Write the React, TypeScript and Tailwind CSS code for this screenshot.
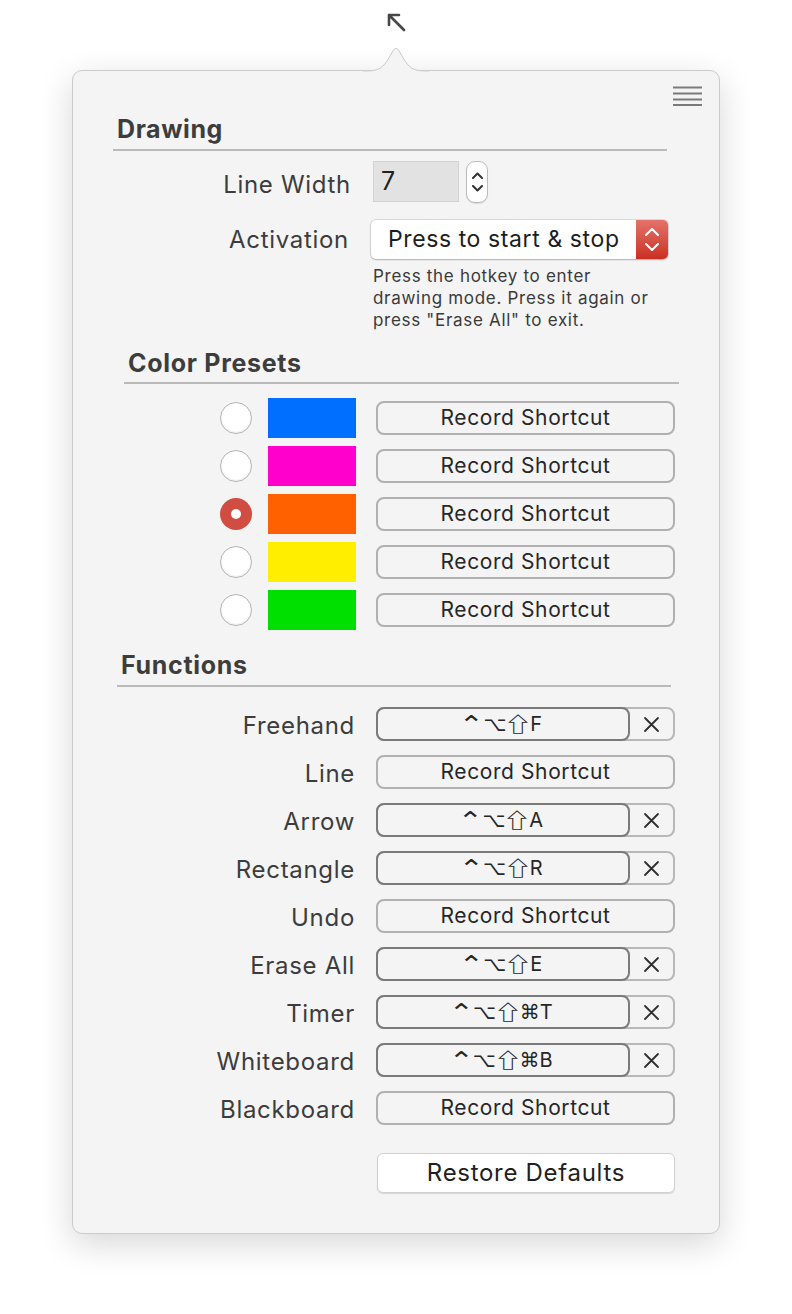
import React from 'react';

const presets = [
  { color: 'bg-[#006fff]', selected: false },
  { color: 'bg-[#ff00cc]', selected: false },
  { color: 'bg-[#ff6000]', selected: true },
  { color: 'bg-[#ffee00]', selected: false },
  { color: 'bg-[#00e000]', selected: false },
];

const functions: { label: string; keys: string[] | null }[] = [
  { label: 'Freehand', keys: ['F'] },
  { label: 'Line', keys: null },
  { label: 'Arrow', keys: ['A'] },
  { label: 'Rectangle', keys: ['R'] },
  { label: 'Undo', keys: null },
  { label: 'Erase All', keys: ['E'] },
  { label: 'Timer', keys: ['⌘', 'T'] },
  { label: 'Whiteboard', keys: ['⌘', 'B'] },
  { label: 'Blackboard', keys: null },
];

const Radio: React.FC<{ selected: boolean }> = ({ selected }) =>
  selected ? (
    <div className="w-[32px] h-[32px] rounded-full bg-[#d14c41] flex items-center justify-center">
      <div className="w-[10px] h-[10px] rounded-full bg-white" />
    </div>
  ) : (
    <div className="w-[32px] h-[32px] rounded-full bg-white border border-[#b4b4b4] shadow-[inset_0_-1px_2px_rgba(0,0,0,0.08)]" />
  );

const CloseIcon = () => (
  <svg width="17" height="17" viewBox="0 0 17 17" fill="none" stroke="#2e2e2e" strokeWidth="1.8" strokeLinecap="round">
    <path d="M2 2 L15 15 M15 2 L2 15" />
  </svg>
);

// modifier keys ⌃⌥⇧ followed by the rest of the combo
const KeyCombo: React.FC<{ keys: string[] }> = ({ keys }) => (
  <span className="flex items-center text-[20px] text-[#262626] leading-none">
    <span className="inline-block font-['DejaVu_Sans',sans-serif] text-[20px] scale-x-[1.5] scale-y-[1.25] mr-[3px]">⌃</span>
    <span className="font-['DejaVu_Sans',sans-serif]">⌥</span>
    <span className="inline-block font-['Noto_Sans_CJK_JP','DejaVu_Sans',sans-serif] text-[20px] scale-x-[1.45] mx-[2px]">⇧</span>
    {keys.map((k, i) => (
      <span key={i} className={k === '⌘' ? "font-['DejaVu_Sans',sans-serif]" : "font-['Inter',sans-serif] tracking-[0.5px]"}>
        {k}
      </span>
    ))}
  </span>
);

const ShortcutField: React.FC<{ keys: string[] | null }> = ({ keys }) => {
  if (!keys) {
    return (
      <div className="w-[299px] h-[34px] rounded-[8px] border-2 border-[#b0b0b0] flex items-center justify-center text-[21px] tracking-[0.6px] text-[#262626]">
        Record Shortcut
      </div>
    );
  }
  return (
    <div className="w-[299px] h-[34px] rounded-[8px] border-2 border-[#b8b8b8] flex">
      <div className="w-[254px] h-[34px] -ml-[2px] -mt-[2px] rounded-[8px] border-2 border-[#7a7a7a] flex items-center justify-center">
        <KeyCombo keys={keys} />
      </div>
      <div className="flex-1 flex items-center justify-center">
        <CloseIcon />
      </div>
    </div>
  );
};

export default function App() {
  return (
    <div className="w-full min-h-[1314px] bg-white font-['Inter','DejaVu_Sans',sans-serif]">
      {/* pointer arrow above the popover */}
      <div className="h-[70px] flex justify-center pt-[12px]">
        <svg width="20" height="20" viewBox="0 0 20 20" fill="none" stroke="#474747" strokeWidth="2.6" strokeLinecap="round" strokeLinejoin="round">
          <path d="M3 3 L18 18 M3 3 L3 13 M3 3 L13 3" />
        </svg>
      </div>

      <div className="relative mx-auto w-[648px] h-[1164px] rounded-[10px] bg-[#f4f4f4] border border-[#cbcbcb] shadow-[0_10px_34px_rgba(0,0,0,0.16)]">
        {/* notch */}
        <svg className="absolute left-[290px] -top-[25px]" width="66" height="27" viewBox="0 0 66 27">
          <path d="M0 25 C13 25 18 24 24 15 L30.5 4 Q33 0.5 35.5 4 L42 15 C48 24 53 25 66 25 L66 27 L0 27 Z" fill="#f4f4f4" />
          <path d="M0 25 C13 25 18 24 24 15 L30.5 4 Q33 0.5 35.5 4 L42 15 C48 24 53 25 66 25" fill="none" stroke="#cbcbcb" strokeWidth="1" />
        </svg>

        {/* menu */}
        <div className="flex justify-end pr-[17px] pt-[15px]">
          <svg width="29" height="20" viewBox="0 0 29 20" stroke="#7a7a7a" strokeWidth="1.8">
            <path d="M0 1.5 H29 M0 7.5 H29 M0 13.5 H29 M0 19 H29" />
          </svg>
        </div>

        {/* Drawing */}
        <div className="mt-[8px] ml-[44px] h-[30px] leading-[30px] text-[25px] tracking-[0.6px] font-bold text-[#3d3d3d]">Drawing</div>
        <div className="mt-[5px] ml-[40px] w-[554px] h-[2px] bg-[#bababa]" />

        <div className="mt-[10px] flex items-center h-[41px]">
          <div className="w-[278px] pt-[7px] text-right text-[24px] tracking-[0.7px] text-[#3c3c3c]">Line Width</div>
          <div className="ml-[22px] w-[86px] h-[41px] bg-[#e2e2e2] border border-[#d2d2d2] flex items-center pl-[7px] text-[25px] text-[#222]">7</div>
          <div className="ml-[7px] w-[22px] h-[42px] rounded-[9px] bg-white border border-[#bcbcbc] shadow-[0_1px_1px_rgba(0,0,0,0.1)] flex flex-col items-center justify-center gap-[6px]">
            <svg width="11" height="7" viewBox="0 0 11 7" fill="none" stroke="#333" strokeWidth="2" strokeLinecap="round" strokeLinejoin="round"><path d="M1 6 L5.5 1.5 L10 6" /></svg>
            <svg width="11" height="7" viewBox="0 0 11 7" fill="none" stroke="#333" strokeWidth="2" strokeLinecap="round" strokeLinejoin="round"><path d="M1 1 L5.5 5.5 L10 1" /></svg>
          </div>
        </div>

        <div className="mt-[18px] flex items-center h-[39px]">
          <div className="w-[276px] pt-[1px] text-right text-[24px] tracking-[0.7px] text-[#3c3c3c]">Activation</div>
          <div className="ml-[22px] w-[297px] h-[39px] rounded-[5px] bg-white shadow-[0_0_0_1px_rgba(0,0,0,0.1),0_1px_2px_rgba(0,0,0,0.2)] flex">
            <div className="flex-1 flex items-center pl-[17px] text-[23px] tracking-[0.6px] text-[#1d1d1d]">Press to start &amp; stop</div>
            <div className="w-[32px] h-[39px] rounded-r-[5px] bg-gradient-to-b from-[#e4716a] to-[#c92d20] flex flex-col items-center justify-center gap-[7px]">
              <svg width="14" height="8" viewBox="0 0 14 8" fill="none" stroke="#fff" strokeWidth="2" strokeLinecap="round" strokeLinejoin="round"><path d="M1 7 L7 1 L13 7" /></svg>
              <svg width="14" height="8" viewBox="0 0 14 8" fill="none" stroke="#fff" strokeWidth="2" strokeLinecap="round" strokeLinejoin="round"><path d="M1 1 L7 7 L13 1" /></svg>
            </div>
          </div>
        </div>

        <div className="mt-[6px] ml-[300px] w-[300px] text-[17px] leading-[22px] tracking-[0.7px] text-[#3a3a3a]">
          Press the hotkey to enter
          <br />
          drawing mode. Press it again or
          <br />
          press "Erase All" to exit.
        </div>

        {/* Color Presets */}
        <div className="mt-[17px] ml-[55px] h-[30px] leading-[30px] text-[25px] tracking-[0.7px] font-bold text-[#3d3d3d]">Color Presets</div>
        <div className="mt-[4px] ml-[51px] w-[555px] h-[2px] bg-[#bababa]" />

        <div className="mt-[10px] flex flex-col">
          {presets.map((p, i) => (
            <div key={i} className="h-[48px] flex items-center">
              <div className="ml-[147px]">
                <Radio selected={p.selected} />
              </div>
              <div className={`ml-[16px] w-[88px] h-[40px] ${p.color}`} />
              <div className="ml-[20px]">
                <ShortcutField keys={null} />
              </div>
            </div>
          ))}
        </div>

        {/* Functions */}
        <div className="mt-[16px] ml-[48px] h-[30px] leading-[30px] text-[25px] tracking-[0.7px] font-bold text-[#3d3d3d]">Functions</div>
        <div className="mt-[5px] ml-[44px] w-[554px] h-[2px] bg-[#bababa]" />

        <div className="mt-[13px] flex flex-col">
          {functions.map((f) => (
            <div key={f.label} className="h-[48px] flex items-center">
              <div className="w-[282px] text-right text-[24px] tracking-[0.7px] text-[#3c3c3c] pt-[3px]">{f.label}</div>
              <div className="ml-[21px]">
                <ShortcutField keys={f.keys} />
              </div>
            </div>
          ))}
        </div>

        <div className="mt-[21px] ml-[304px] w-[298px] h-[40px] rounded-[6px] bg-white border border-[#d0d0d0] shadow-[0_1px_1px_rgba(0,0,0,0.12)] flex items-center justify-center text-[24px] tracking-[0.7px] text-[#1f1f1f]">
          Restore Defaults
        </div>
      </div>
    </div>
  );
}
